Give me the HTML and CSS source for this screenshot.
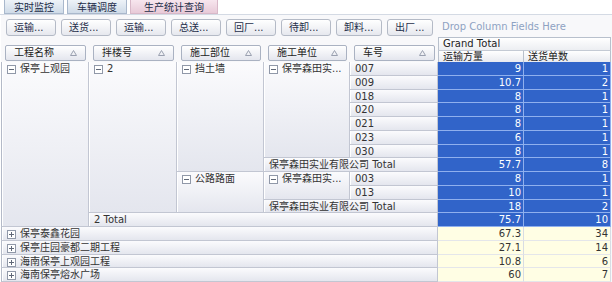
FILE: index.html
```html
<!DOCTYPE html>
<html>
<head>
<meta charset="utf-8">
<link rel="stylesheet" href="styles.css">
</head>
<body>
<div class="tabs">
  <div class="tab">实时监控</div>
  <div class="tab">车辆调度</div>
  <div class="tab active">生产统计查询</div>
</div>
<div class="pivot">
  <div class="filters">
    <span class="fbtn">运输...</span>
    <span class="fbtn">送货...</span>
    <span class="fbtn">运输...</span>
    <span class="fbtn">总送...</span>
    <span class="fbtn">回厂...</span>
    <span class="fbtn">待卸...</span>
    <span class="fbtn narrow">卸料...</span>
    <span class="fbtn narrow">出厂...</span>
  </div>
  <div class="drop">Drop Column Fields Here</div>

  <div class="fieldcell"><span class="field">工程名称<svg class="sort" viewBox="0 0 7 6"><path d="M3.5 0.5 L6.5 5.5 L0.5 5.5 Z" fill="none" stroke="#9aa0b0"/></svg></span></div>
  <div class="fieldcell"><span class="field">拌楼号<svg class="sort" viewBox="0 0 7 6"><path d="M3.5 0.5 L6.5 5.5 L0.5 5.5 Z" fill="none" stroke="#9aa0b0"/></svg></span></div>
  <div class="fieldcell"><span class="field">施工部位<svg class="sort" viewBox="0 0 7 6"><path d="M3.5 0.5 L6.5 5.5 L0.5 5.5 Z" fill="none" stroke="#9aa0b0"/></svg></span></div>
  <div class="fieldcell"><span class="field">施工单位<svg class="sort" viewBox="0 0 7 6"><path d="M3.5 0.5 L6.5 5.5 L0.5 5.5 Z" fill="none" stroke="#9aa0b0"/></svg></span></div>
  <div class="fieldcell"><span class="field">车号<svg class="sort" viewBox="0 0 7 6"><path d="M3.5 0.5 L6.5 5.5 L0.5 5.5 Z" fill="none" stroke="#9aa0b0"/></svg></span></div>
  <div class="gt">Grand Total</div>
  <div class="dh">运输方量</div>
  <div class="dh">送货单数</div>

  <div class="rh rs12"><svg class="ex" viewBox="0 0 9 9"><rect x="0.5" y="0.5" width="8" height="8" fill="#fff" stroke="#9098a8"/><path d="M2 4.5H7" stroke="#606878"/></svg>保亭上观园</div>
  <div class="rh rs11"><svg class="ex" viewBox="0 0 9 9"><rect x="0.5" y="0.5" width="8" height="8" fill="#fff" stroke="#9098a8"/><path d="M2 4.5H7" stroke="#606878"/></svg>2</div>
  <div class="rh rs8"><svg class="ex" viewBox="0 0 9 9"><rect x="0.5" y="0.5" width="8" height="8" fill="#fff" stroke="#9098a8"/><path d="M2 4.5H7" stroke="#606878"/></svg>挡土墙</div>
  <div class="rh rs7"><svg class="ex" viewBox="0 0 9 9"><rect x="0.5" y="0.5" width="8" height="8" fill="#fff" stroke="#9098a8"/><path d="M2 4.5H7" stroke="#606878"/></svg>保亭森田实...</div>
  <div class="rh">007</div><div class="v sel">9</div><div class="v sel">1</div>
  <div class="rh">009</div><div class="v sel">10.7</div><div class="v sel">2</div>
  <div class="rh">018</div><div class="v sel">8</div><div class="v sel">1</div>
  <div class="rh">020</div><div class="v sel">8</div><div class="v sel">1</div>
  <div class="rh">021</div><div class="v sel">8</div><div class="v sel">1</div>
  <div class="rh">023</div><div class="v sel">6</div><div class="v sel">1</div>
  <div class="rh">030</div><div class="v sel">8</div><div class="v sel">1</div>
  <div class="rh cs2">保亭森田实业有限公司 Total</div><div class="v sel">57.7</div><div class="v sel">8</div>
  <div class="rh rs3"><svg class="ex" viewBox="0 0 9 9"><rect x="0.5" y="0.5" width="8" height="8" fill="#fff" stroke="#9098a8"/><path d="M2 4.5H7" stroke="#606878"/></svg>公路路面</div>
  <div class="rh rs2"><svg class="ex" viewBox="0 0 9 9"><rect x="0.5" y="0.5" width="8" height="8" fill="#fff" stroke="#9098a8"/><path d="M2 4.5H7" stroke="#606878"/></svg>保亭森田实...</div>
  <div class="rh">003</div><div class="v sel">8</div><div class="v sel">1</div>
  <div class="rh">013</div><div class="v sel">10</div><div class="v sel">1</div>
  <div class="rh cs2">保亭森田实业有限公司 Total</div><div class="v sel">18</div><div class="v sel">2</div>
  <div class="rh cs4">2 Total</div><div class="v sel">75.7</div><div class="v sel">10</div>
  <div class="rh cs5"><svg class="ex" viewBox="0 0 9 9"><rect x="0.5" y="0.5" width="8" height="8" fill="#fff" stroke="#9098a8"/><path d="M2 4.5H7M4.5 2V7" stroke="#606878"/></svg>保亭泰鑫花园</div><div class="v">67.3</div><div class="v">34</div>
  <div class="rh cs5"><svg class="ex" viewBox="0 0 9 9"><rect x="0.5" y="0.5" width="8" height="8" fill="#fff" stroke="#9098a8"/><path d="M2 4.5H7M4.5 2V7" stroke="#606878"/></svg>保亭庄园豪都二期工程</div><div class="v">27.1</div><div class="v">14</div>
  <div class="rh cs5"><svg class="ex" viewBox="0 0 9 9"><rect x="0.5" y="0.5" width="8" height="8" fill="#fff" stroke="#9098a8"/><path d="M2 4.5H7M4.5 2V7" stroke="#606878"/></svg>海南保亭上观园工程</div><div class="v">10.8</div><div class="v">6</div>
  <div class="rh cs5"><svg class="ex" viewBox="0 0 9 9"><rect x="0.5" y="0.5" width="8" height="8" fill="#fff" stroke="#9098a8"/><path d="M2 4.5H7M4.5 2V7" stroke="#606878"/></svg>海南保亭熔水广场</div><div class="v">60</div><div class="v">7</div>
</div>
</body>
</html>
```

FILE: styles.css
```css
* { box-sizing: border-box; }
html, body { margin: 0; padding: 0; background: #ffffff; }
body {
  font-family: "DejaVu Sans", "Noto Sans CJK SC", sans-serif;
  font-size: 10px;
  color: #333;
  width: 612px;
  height: 282px;
  overflow: hidden;
}
.tabs {
  display: flex;
  gap: 3px;
  height: 15px;
  padding-left: 4px;
  border-bottom: 1px solid #d4dae4;
}
.tab {
  height: 14px;
  padding: 0 9px;
  line-height: 13px;
  font-family: "Noto Sans CJK SC", sans-serif;
  font-size: 10px;
  color: #1c2c48;
  background: linear-gradient(#eef3f8, #cfdbe8);
  border: 1px solid #a9b8cc;
  border-top: none;
}
.tab.active {
  padding: 0 13px;
  background: linear-gradient(#f7e6ee, #e8cad8);
  border-color: #d8b8c8;
}
.pivot {
  display: grid;
  grid-template-columns: 88px 88px 87px 86px 88px 86px 87px;
  grid-template-rows: 22px 13px 12px repeat(16, 13.75px);
  margin-left: 1px;
  background: #f8f8fa;
}
.filters {
  grid-column: span 5;
  display: flex;
  align-items: center;
  gap: 5px;
  padding-left: 5px;
  padding-top: 2px;
}
.fbtn {
  height: 17px;
  width: 50px;
  line-height: 15px;
  padding-left: 7px;
  border: 1px solid #b4bac6;
  border-radius: 3px;
  background: linear-gradient(#ffffff, #e6e8ee);
  color: #1f2f4a;
  white-space: nowrap;
}
.fbtn.narrow { width: 46px; }
.drop {
  grid-column: span 2;
  color: #8ea2c2;
  padding-left: 4px;
  padding-top: 6px;
  white-space: nowrap;
}
.fieldcell {
  grid-row: span 2;
  display: flex;
  align-items: flex-end;
  padding: 0 3px 1px 4px;
}
.field {
  flex: 1;
  height: 16px;
  line-height: 14px;
  padding: 0 8px;
  display: flex;
  justify-content: space-between;
  align-items: center;
  border: 1px solid #aab2c2;
  border-radius: 2px;
  background: linear-gradient(#ffffff, #e4e6ee);
  color: #222;
}
.sort { width: 7px; height: 6px; }
.gt {
  grid-column: span 2;
  border: 1px solid #b8c0cc;
  border-bottom: none;
  background: linear-gradient(#ffffff, #eceef2);
  padding-left: 4px;
  line-height: 12px;
  color: #222;
}
.dh {
  border-top: 1px solid #c4cad4;
  border-right: 1px solid #b8c0cc;
  border-left: 1px solid #b8c0cc;
  background: linear-gradient(#ffffff, #e8eaf0);
  padding-left: 4px;
  line-height: 11px;
  color: #222;
}
.dh + .dh { border-left: none; }
.rh {
  border-right: 1px solid #c2c6d2;
  border-bottom: 1px solid #c2c6d2;
  background: linear-gradient(#fbfbfd, #e4e6ee);
  box-shadow: inset 1px 0 #ffffff;
  padding-left: 5px;
  padding-top: 1px;
  line-height: 12px;
  white-space: nowrap;
  overflow: hidden;
  display: flex;
  align-items: flex-start;
}
.rs12 { grid-row: span 12; border-left: 1px solid #b4bac8; }
.rs11 { grid-row: span 11; }
.rs8 { grid-row: span 8; }
.rs7 { grid-row: span 7; }
.rs3 { grid-row: span 3; }
.rs2 { grid-row: span 2; }
.cs2 { grid-column: span 2; }
.cs4 { grid-column: span 4; }
.cs5 { grid-column: span 5; border-left: 1px solid #b4bac8; }
.ex { width: 9px; height: 9px; margin: 2px 4px 0 0; flex: none; }
.v {
  text-align: right;
  padding-right: 2px;
  line-height: 13px;
  background: #fffee4;
  border-right: 1px solid #d8dce4;
  border-bottom: 1px solid #e4e6ea;
  color: #333;
}
.v.sel {
  background: #3164c9;
  color: #ffffff;
  border-right: 1px solid #8fb0ee;
  border-bottom: 1px solid #8fb0ee;
}
```
